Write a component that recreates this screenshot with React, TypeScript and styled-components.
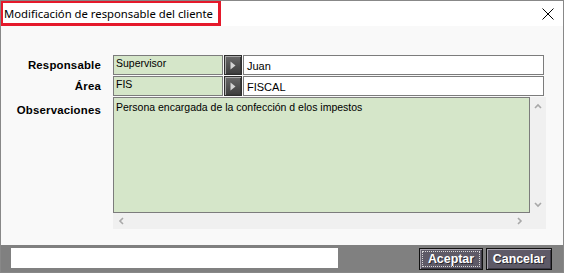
import React from "react";
import styled, { createGlobalStyle } from "styled-components";

const Global = createGlobalStyle`
  html, body { margin: 0; padding: 0; background: #ffffff; }
  * { box-sizing: border-box; }
`;

const Window = styled.div`
  width: 564px;
  height: 273px;
  border: 1px solid #888888;
  display: flex;
  flex-direction: column;
  background: #f9f9f9;
  overflow: hidden;
`;

const TitleBar = styled.div`
  height: 25px;
  flex: none;
  background: #ffffff;
  display: flex;
  align-items: flex-start;
  justify-content: space-between;
`;

const Title = styled.div`
  margin: -1px 0 0 -1px;
  height: 26px;
  border: 3px solid #e5192b;
  padding: 0 5px 0 1px;
  display: flex;
  align-items: center;
  font-family: "Noto Sans", "Liberation Sans", sans-serif;
  font-size: 11.3px;
  color: #000;
  white-space: nowrap;
`;

const CloseBtn = styled.div`
  width: 12px;
  height: 12px;
  margin: 7px 9px 0 0;
  display: flex;
`;

const Body = styled.div`
  flex: 1;
  padding: 29px 17px 0 0;
  display: grid;
  grid-template-columns: 100px 1fr;
  column-gap: 12px;
  row-gap: 1px;
  align-content: start;
`;

const Label = styled.div<{ $top?: number }>`
  font-family: "Liberation Sans", Arial, sans-serif;
  font-weight: bold;
  font-size: 11.4px;
  letter-spacing: 0.2px;
  text-align: right;
  color: #000;
  padding-top: ${(p) => p.$top ?? 4}px;
  line-height: 13px;
`;

const FieldRow = styled.div`
  display: flex;
  gap: 1px;
  height: 20px;
  margin-right: 2px;
`;

const CodeBox = styled.div`
  width: 110px;
  flex: none;
  background: #d5e6c9;
  border: 1px solid #7c7c7c;
  font-family: "Liberation Sans", Arial, sans-serif;
  font-size: 10.5px;
  line-height: 12px;
  padding: 1px 0 0 2px;
  color: #000;
`;

const PickBtn = styled.div`
  width: 18px;
  flex: none;
  border: 1px solid #2e2e2e;
  box-shadow: inset 1px 1px 0 #a9a9a9, inset -1px -1px 0 #3a3a3a;
  background: linear-gradient(180deg, #6a6a6a 0%, #505050 55%, #3e3e3e 100%);
  display: flex;
  align-items: center;
  justify-content: center;
`;

const ValueBox = styled.div`
  flex: 1;
  background: #ffffff;
  border: 1px solid #7c7c7c;
  font-family: "Liberation Sans", Arial, sans-serif;
  font-size: 11px;
  display: flex;
  align-items: center;
  padding: 1px 0 0 3px;
  color: #000;
`;

const MemoWrap = styled.div`
  display: grid;
  grid-template-columns: 1fr 16px;
  grid-template-rows: 116px 16px;
`;

const Memo = styled.div`
  background: #d5e6c9;
  border: 1px solid #7c7c7c;
  font-family: "Liberation Sans", Arial, sans-serif;
  font-size: 10.5px;
  line-height: 12px;
  padding: 3px 0 0 2px;
  color: #000;
`;

const VScroll = styled.div`
  background: #f0f0f0;
  display: flex;
  flex-direction: column;
  justify-content: space-between;
  align-items: center;
  padding: 6px 0 4px;
`;

const HScroll = styled.div`
  grid-column: 1 / span 2;
  background: #f0f0f0;
  display: flex;
  justify-content: space-between;
  align-items: center;
  padding: 0 22px 0 5px;
`;

const Footer = styled.div`
  height: 27px;
  flex: none;
  background: #808080;
  display: flex;
  align-items: flex-start;
  padding: 3px 11px 0 10px;
`;

const StatusInput = styled.div`
  width: 327px;
  height: 20px;
  background: #ffffff;
`;

const Buttons = styled.div`
  margin-left: auto;
  display: flex;
  gap: 3px;
`;

const Btn = styled.div<{ $w: number; $focus?: boolean }>`
  width: ${(p) => p.$w}px;
  height: 22px;
  border: 1px solid #111;
  background: #5e5a67;
  box-shadow: inset 1px 1px 0 #a6a2ad, inset -1px -1px 0 #3c3944;
  display: flex;
  align-items: center;
  justify-content: center;
  font-family: "Liberation Sans", Arial, sans-serif;
  font-weight: bold;
  font-size: 12.4px;
  color: #ffffff;
  text-shadow: 1px 1px 0 #2a2830;
  position: relative;
  &::after {
    content: "";
    display: ${(p) => (p.$focus ? "block" : "none")};
    position: absolute;
    inset: 2px;
    border: 1px dotted #d8d8d8;
  }
`;

const Chevron = ({ dir }: { dir: "up" | "down" | "left" | "right" }) => {
  const paths: Record<string, string> = {
    up: "M1 5 L4 2 L7 5",
    down: "M1 2 L4 5 L7 2",
    left: "M5 1 L2 4 L5 7",
    right: "M2 1 L5 4 L2 7",
  };
  return (
    <svg width="8" height="8" viewBox="0 0 8 8">
      <path d={paths[dir]} fill="none" stroke="#a8a8a8" strokeWidth="1.6" />
    </svg>
  );
};

const Triangle = () => (
  <svg width="6" height="9" viewBox="0 0 6 9">
    <path d="M0.5 0.5 L5.5 4.5 L0.5 8.5 Z" fill="#d4d4d4" />
  </svg>
);

export default function App() {
  return (
    <>
      <Global />
      <Window>
        <TitleBar>
          <Title>Modificación de responsable del cliente</Title>
          <CloseBtn>
            <svg width="12" height="12" viewBox="0 0 12 12">
              <path d="M0.5 0.5 L11.5 11.5 M11.5 0.5 L0.5 11.5" stroke="#000" strokeWidth="1" />
            </svg>
          </CloseBtn>
        </TitleBar>
        <Body>
          <Label>Responsable</Label>
          <FieldRow>
            <CodeBox>Supervisor</CodeBox>
            <PickBtn>
              <Triangle />
            </PickBtn>
            <ValueBox>Juan</ValueBox>
          </FieldRow>
          <Label>Área</Label>
          <FieldRow>
            <CodeBox>FIS</CodeBox>
            <PickBtn>
              <Triangle />
            </PickBtn>
            <ValueBox>FISCAL</ValueBox>
          </FieldRow>
          <Label $top={7}>Observaciones</Label>
          <MemoWrap>
            <Memo>Persona encargada de la confección d elos impestos</Memo>
            <VScroll>
              <Chevron dir="up" />
              <Chevron dir="down" />
            </VScroll>
            <HScroll>
              <Chevron dir="left" />
              <Chevron dir="right" />
            </HScroll>
          </MemoWrap>
        </Body>
        <Footer>
          <StatusInput />
          <Buttons>
            <Btn $w={64} $focus>
              Aceptar
            </Btn>
            <Btn $w={66}>Cancelar</Btn>
          </Buttons>
        </Footer>
      </Window>
    </>
  );
}
